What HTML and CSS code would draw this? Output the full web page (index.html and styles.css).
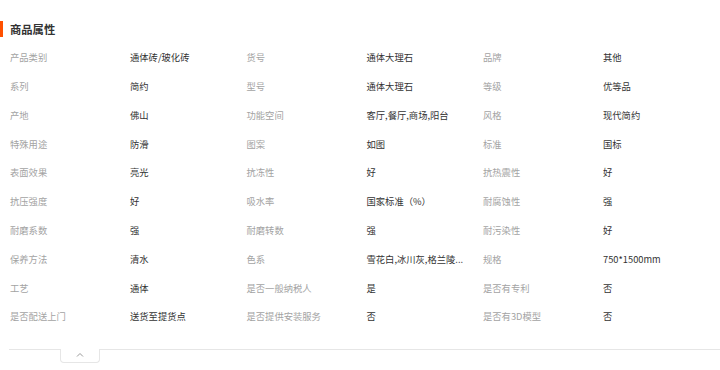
FILE: index.html
```html
<!DOCTYPE html>
<html lang="zh-CN">
<head>
<meta charset="utf-8">
<title>商品属性</title>
<link rel="stylesheet" href="styles.css">
</head>
<body>
<section class="props">
  <h2 class="props-title">商品属性</h2>
  <div class="attrs">
    <span class="k">产品类别</span><span class="v">通体砖/玻化砖</span>
    <span class="k">货号</span><span class="v">通体大理石</span>
    <span class="k">品牌</span><span class="v">其他</span>

    <span class="k">系列</span><span class="v">简约</span>
    <span class="k">型号</span><span class="v">通体大理石</span>
    <span class="k">等级</span><span class="v">优等品</span>

    <span class="k">产地</span><span class="v">佛山</span>
    <span class="k">功能空间</span><span class="v">客厅,餐厅,商场,阳台</span>
    <span class="k">风格</span><span class="v">现代简约</span>

    <span class="k">特殊用途</span><span class="v">防滑</span>
    <span class="k">图案</span><span class="v">如图</span>
    <span class="k">标准</span><span class="v">国标</span>

    <span class="k">表面效果</span><span class="v">亮光</span>
    <span class="k">抗冻性</span><span class="v">好</span>
    <span class="k">抗热震性</span><span class="v">好</span>

    <span class="k">抗压强度</span><span class="v">好</span>
    <span class="k">吸水率</span><span class="v">国家标准（%）</span>
    <span class="k">耐腐蚀性</span><span class="v">强</span>

    <span class="k">耐磨系数</span><span class="v">强</span>
    <span class="k">耐磨转数</span><span class="v">强</span>
    <span class="k">耐污染性</span><span class="v">好</span>

    <span class="k">保养方法</span><span class="v">清水</span>
    <span class="k">色系</span><span class="v">雪花白,冰川灰,格兰陵...</span>
    <span class="k">规格</span><span class="v">750*1500mm</span>

    <span class="k">工艺</span><span class="v">通体</span>
    <span class="k">是否一般纳税人</span><span class="v">是</span>
    <span class="k">是否有专利</span><span class="v">否</span>

    <span class="k">是否配送上门</span><span class="v">送货至提货点</span>
    <span class="k">是否提供安装服务</span><span class="v">否</span>
    <span class="k">是否有3D模型</span><span class="v">否</span>
  </div>
  <div class="fold">
    <button class="fold-tab" type="button" aria-label="收起">
      <svg width="8" height="5" viewBox="0 0 8 5"><polyline points="1,4.5 4,1.5 7,4.5" fill="none" stroke="#999" stroke-width="1"/></svg>
    </button>
  </div>
</section>
</body>
</html>
```

FILE: styles.css
```css
html, body {
  margin: 0;
  padding: 0;
  background: #fff;
}

body {
  font-family: "Noto Sans CJK SC", "Noto Sans", sans-serif;
  color: #333;
}

.props {
  padding-top: 21px;
}

.props-title {
  margin: 0;
  height: 16px;
  line-height: 16px;
  border-left: 3px solid #ff5000;
  padding-left: 7px;
  font-size: 11.3px;
  font-weight: bold;
  color: #333;
}

.attrs {
  display: grid;
  grid-template-columns: repeat(3, 120px 116.5px);
  grid-auto-rows: 28.78px;
  align-items: center;
  padding-left: 10px;
  margin-top: 6px;
  font-size: 9.3px;
}

.attrs span {
  white-space: nowrap;
}

.k {
  color: #a3a3a3;
}

.v {
  color: #333;
}

.fold {
  margin: 18px 0 0 9px;
  border-top: 1px solid #e6e6e6;
}

.fold-tab {
  display: flex;
  align-items: flex-start;
  justify-content: center;
  margin: -1px 0 0 51px;
  width: 40px;
  height: 14px;
  padding: 3px 0 0;
  background: #fff;
  border: 1px solid #e6e6e6;
  border-top: none;
  border-radius: 0 0 4px 4px;
  cursor: pointer;
}
```
